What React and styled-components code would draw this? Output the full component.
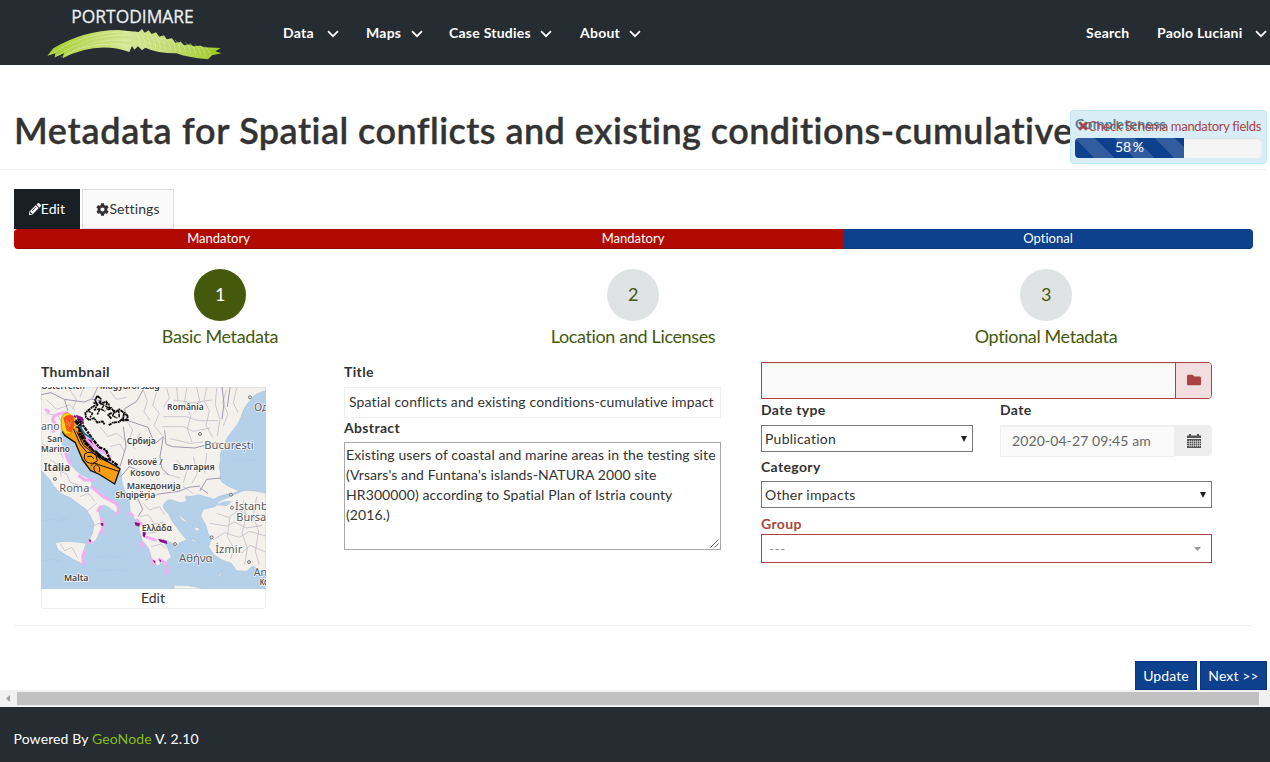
import React from "react";
import styled, { createGlobalStyle, css } from "styled-components";
import { FaPencilAlt, FaCog, FaTimes, FaFolder } from "react-icons/fa";

const Global = createGlobalStyle`
  * { box-sizing: border-box; }
  body { margin: 0; background: #fff; overflow: hidden; }
`;

const Page = styled.div`
  width: 1270px;
  height: 762px;
  display: flex;
  flex-direction: column;
  overflow: hidden;
  font-family: Lato, "Liberation Sans", sans-serif;
  font-size: 14px;
  line-height: 20px;
  color: #333;
  font-variant-ligatures: none;
`;

/* ---------- top bar ---------- */
const TopBar = styled.header`
  height: 65px;
  flex: none;
  display: flex;
  align-items: center;
  padding: 1px 3px 0 47px;
  background: #252c32;
  color: #fff;
  font-weight: 700;
`;
const Nav = styled.nav`
  display: flex;
  flex: 1;
  align-items: center;
  margin-left: 60px;
`;
const NavItem = styled.a`
  display: flex;
  align-items: center;
  white-space: nowrap;
  width: ${(p) => p.$w}px;
  letter-spacing: 0.25px;
`;
const NavText = styled.span`
  flex: none;
`;
const Chevron = styled.svg`
  margin-left: ${(p) => p.$gap}px;
  margin-top: 1px;
  flex: none;
`;
const Spacer = styled.div`
  flex: 1;
`;

/* ---------- content ---------- */
const Main = styled.main`
  height: 625px;
  flex: none;
  display: flex;
  flex-direction: column;
`;
const HeadRow = styled.div`
  position: relative;
  height: 105px;
  flex: none;
  padding: 45px 0 0 14px;
  margin-right: 3px;
  border-bottom: 1px solid #eee;
`;
const Heading = styled.h2`
  margin: 0;
  font-size: 36px;
  line-height: 40px;
  font-weight: 600;
  letter-spacing: 0.45px;
  -webkit-text-stroke: 0.35px #333;
  white-space: nowrap;
`;
const HeadingPrefix = styled.span`
  letter-spacing: 0.7px;
`;
const Completeness = styled.aside`
  position: absolute;
  right: 0;
  top: 45px;
  width: 197px;
  height: 54px;
  padding: 4px;
  border: 1px solid #bce8f1;
  border-radius: 4px;
  background: #d9edf7;
`;
const CompTitle = styled.div`
  height: 23px;
  line-height: 18px;
  font-weight: 700;
  letter-spacing: 0.25px;
  color: #31708f;
  opacity: 0.85;
`;
const CompWarning = styled.div`
  position: absolute;
  left: 6px;
  top: 6px;
  display: flex;
  align-items: center;
  font-size: 13px;
  line-height: 18px;
  letter-spacing: -0.3px;
  color: #a94442;
  white-space: nowrap;

  svg {
    stroke: #a94442;
    stroke-width: 30px;
    margin-right: -1px;
  }
`;
const Track = styled.div`
  height: 20px;
  border-radius: 4px;
  overflow: hidden;
  background: #f5f5f5;
  box-shadow: inset 0 1px 2px rgba(0, 0, 0, 0.1);
`;
const Fill = styled.div`
  width: 58.3%;
  height: 100%;
  text-align: center;
  line-height: 18px;
  word-spacing: -2px;
  color: #fff;
  background-color: #0d408d;
  background-image: linear-gradient(
    45deg,
    rgba(255, 255, 255, 0.15) 25%,
    transparent 25%,
    transparent 50%,
    rgba(255, 255, 255, 0.15) 50%,
    rgba(255, 255, 255, 0.15) 75%,
    transparent 75%,
    transparent
  );
  background-size: 40px 40px;
`;

const Workspace = styled.section`
  display: flex;
  flex-direction: column;
  height: 437px;
  flex: none;
  margin: 19px 17px 0 14px;
  border-bottom: 1px solid #f2f2f2;
  border-radius: 0 0 2px 2px;
`;
const Tabs = styled.div`
  display: flex;
  gap: 2px;
  height: 40px;
  flex: none;
  box-shadow: inset 0 -1px #f5f5f5;
`;
const Tab = styled.a`
  display: flex;
  align-items: center;
  justify-content: center;
  width: ${(p) => p.$w}px;
  height: 40px;
  border: 1px solid #ddd;
  background: #fafafa;
  color: #333;
  letter-spacing: 0.1px;
  ${(p) =>
    p.$active &&
    css`
      background: #181f25;
      border-color: #181f25;
      color: #fff;
    `}
`;
const Stages = styled.div`
  display: flex;
  height: 20px;
  flex: none;
  border-radius: 4px;
  overflow: hidden;
`;
const Stage = styled.div`
  width: ${(p) => p.$w}px;
  flex: none;
  text-align: center;
  color: #fff;
  font-size: 13px;
  line-height: 19px;
  background: ${(p) => (p.$optional ? "#0d408d" : "#b10a00")};
  box-shadow: inset 0 -1px 0 rgba(0, 0, 0, 0.15);
`;
const Steps = styled.div`
  display: flex;
  padding: 20px 1px 0 0;
  margin-left: -1px;
  flex: none;
`;
const Step = styled.div`
  flex: 1;
  display: flex;
  flex-direction: column;
  align-items: center;
  font-size: 18px;
  line-height: 26px;
  letter-spacing: -0.36px;
  color: #44590c;
`;
const StepName = styled.span`
  padding-left: 1px;
`;
const Bubble = styled.span`
  width: 52px;
  height: 52px;
  border-radius: 50%;
  margin-bottom: 2px;
  padding: 0 0 2px 1px;
  display: grid;
  place-items: center;
  background: ${(p) => (p.$active ? "#44590c" : "#dfe3e4")};
  color: ${(p) => (p.$active ? "#fff" : "#44590c")};
`;

/* ---------- form ---------- */
const Form = styled.div`
  display: flex;
  padding: 13px 41px 0 27px;
  flex: none;
`;
const ThumbCol = styled.div`
  width: 225px;
  margin-right: 78px;
`;
const TextCol = styled.div`
  width: 377px;
  margin-right: 40px;
`;
const SideCol = styled.div`
  width: 451px;
`;
const Label = styled.label`
  display: block;
  height: ${(p) => p.$h || 25}px;
  line-height: ${(p) => p.$lh || 20}px;
  font-weight: 700;
  letter-spacing: 0.35px;
  color: ${(p) => (p.$error ? "#a94442" : "#333")};
`;
const MapSvg = styled.svg`
  display: block;
`;
const ThumbEdit = styled.button`
  display: block;
  width: 225px;
  height: 20px;
  padding: 0 1px 2px 0;
  border: 1px solid #eee;
  border-top: 0;
  border-radius: 0 0 3px 3px;
  background: #fff;
  color: #333;
  font: 14px/17px Lato, sans-serif;
`;
const TextInput = styled.div`
  height: 31px;
  padding: 0 0 0 4px;
  margin-bottom: 1px;
  border: 1px solid #eee;
  line-height: 28px;
  letter-spacing: 0.13px;
  white-space: nowrap;
`;
const AbstractBox = styled.div`
  position: relative;
  height: 108px;
  padding: 2px 3px 2px 1px;
  border: 1px solid #a9a9a9;
  line-height: 20px;
  letter-spacing: 0.1px;
`;
const Grip = styled.svg`
  position: absolute;
  right: 1px;
  bottom: 1px;
`;
const FileRow = styled.div`
  display: flex;
  height: 37px;
  margin-bottom: 1px;
  border: 1px solid #a94442;
  border-radius: 0 4px 4px 0;
  background: #fafafa;
  overflow: hidden;
  box-shadow: inset 0 1px 1px rgba(0, 0, 0, 0.075);
`;
const FileButton = styled.span`
  margin-left: auto;
  width: 36px;
  padding-bottom: 1px;
  border-left: 1px solid #a94442;
  background: #f2dede;
  color: #a94442;
  display: grid;
  place-items: center;
`;
const DateRow = styled.div`
  display: flex;
  justify-content: space-between;
  height: 57px;
`;
const Half = styled.div`
  width: 212px;
`;
const Select = styled.div`
  display: flex;
  align-items: center;
  justify-content: space-between;
  height: 27px;
  padding: 0 5px 0 3px;
  border: 1px solid #767676;
  background: #fff;
  letter-spacing: 0.25px;
  margin-bottom: 6px;
`;
const GroupSelect = styled(Select)`
  height: 29px;
  padding: 0 10px 0 7px;
  border-color: #a94442;
  color: #999;
`;
const DateBox = styled.div`
  display: flex;
  height: 32px;
  border-radius: 0 4px 4px 0;
  overflow: hidden;
`;
const DateValue = styled.div`
  flex: 1;
  padding-left: 11px;
  border: 1px solid #eee;
  border-top-width: 2px;
  background: #fafafa;
  color: #666;
  font-size: 14px;
  line-height: 28px;
  letter-spacing: 0.1px;
`;
const DateButton = styled.span`
  width: 37px;
  height: 31px;
  background: #eee;
  display: grid;
  place-items: center;
  border-radius: 0 4px 4px 0;
`;

/* ---------- bottom ---------- */
const Actions = styled.div`
  display: flex;
  justify-content: flex-end;
  gap: 3px;
  margin-top: auto;
  padding-right: 3px;
`;
const Action = styled.button`
  width: ${(p) => p.$w}px;
  height: 29px;
  padding: 0;
  border: 1px solid #0a3388;
  background: #0d408d;
  color: #fff;
  font: 14px/27px Lato, sans-serif;
  letter-spacing: 0.1px;
  white-space: nowrap;
`;
const ScrollBar = styled.div`
  height: 17px;
  flex: none;
  display: flex;
  align-items: center;
  background: #f1f1f1;
`;
const ScrollThumb = styled.div`
  width: 1242px;
  height: 13px;
  background: #c1c1c1;
`;
const Footer = styled.footer`
  height: 55px;
  flex: none;
  padding: 22px 13.5px 0;
  background: #252c32;
  color: #fff;
  letter-spacing: 0.12px;
`;
const FooterLink = styled.a`
  color: #84bd1c;
`;

const Down = ({ gap = 12 }) => (
  <Chevron $gap={gap} width="12" height="8" viewBox="0 0 12 8">
    <path d="M1 1.2l5 5 5-5" fill="none" stroke="#fff" strokeWidth="1.7" />
  </Chevron>
);

const ribs = Array.from({ length: 15 }, (_, i) => i);

const Logo = () => (
  <svg width="176" height="64" viewBox="141 0 528 192">
    <defs>
      <linearGradient id="wave" x1="0" x2="1">
        <stop offset="0" stopColor="#a5cf2c" />
        <stop offset="0.45" stopColor="#d3e794" />
        <stop offset="0.7" stopColor="#c5dd78" />
        <stop offset="1" stopColor="#9bcb1f" />
      </linearGradient>
    </defs>
    <text x="214" y="67" fontFamily="'Open Sans', sans-serif" fontWeight="400" fontSize="55" textLength="367" lengthAdjust="spacingAndGlyphs" fill="#eef0f0" stroke="#eef0f0" strokeWidth="0.8">
      PORTODIMARE
    </text>
    <path
      d="M142 164 L160 142 Q250 88 355 87 L416 93 L426 84 L434 95 L446 88 L455 99 L468 94 L478 107 L492 103 L500 115 L516 112 L526 125 L542 123 L552 133 L570 130 L580 136 L600 134 L614 139 L662 141 L646 151 L665 157 L636 163 L624 175 Q560 169 530 157 Q470 157 436 140 L426 148 L414 136 L403 146 L396 135 L388 153 Q290 119 188 172 L192 157 L164 169 L166 157 Z"
      fill="url(#wave)"
    />
    <g fill="none" stroke="#f3f8df" strokeWidth="1.8" opacity="0.6" transform="translate(0 -3)">
      <path d="M164 172 Q270 100 398 104 M182 172 Q270 113 394 120 M200 162 Q290 118 394 138 M150 164 Q250 96 380 95" />
      {ribs.map((i) => (
        <path key={i} d={`M${405 + i * 15} ${94 + i * 3.2} q18 20 16 ${48 - i * 1.3}`} />
      ))}
    </g>
    <g fill="none" stroke="#84ae1b" strokeWidth="1.6" strokeDasharray="2 4" opacity="0.7" transform="translate(0 -3)">
      <path d="M175 160 Q280 102 395 112 M192 164 Q290 112 390 130 M440 120 Q530 155 650 152 M440 134 Q530 162 640 162 M160 156 Q250 103 370 99" />
    </g>
  </svg>
);

const Place = ({ x, y, w, size = 26, bold, children }) => (
  <text
    x={x}
    y={y}
    fontSize={size}
    textLength={w}
    lengthAdjust="spacingAndGlyphs"
    fontWeight={bold ? 600 : 400}
    fill={bold ? "#444" : "#5b5b60"}
    stroke="#fff"
    strokeWidth="5"
    strokeOpacity="0.8"
    paintOrder="stroke"
    strokeLinejoin="round"
  >
    {children}
  </text>
);

const MapThumb = () => (
  <MapSvg width="225" height="202" viewBox="33 81 675 606" fontFamily="'Noto Sans', sans-serif">
    <rect x="33" y="81" width="675" height="606" fill="#b5d0e9" />
    {/* land */}
    <g fill="#f4f1ec" stroke="#9fbcd6" strokeWidth="1.5">
      <path d="M33 81 H708 V92 Q672 100 664 118 Q640 140 634 168 Q628 190 606 214 Q584 240 582 262 Q566 280 572 300 Q564 320 572 342 Q566 352 576 366 Q598 384 628 392 L610 400 Q570 404 552 418 Q528 410 506 404 Q480 412 466 408 L470 424 Q450 432 436 424 Q412 410 400 436 Q398 446 416 462 Q424 484 440 502 Q456 524 470 540 L448 548 L438 562 L424 548 L392 536 L412 562 L424 590 L412 600 L412 640 L398 606 L384 618 L368 606 L356 566 L336 540 L326 500 L310 470 L300 452 L298 412 Q280 392 276 366 L272 328 Q240 310 218 286 Q180 240 158 208 L140 180 Q112 160 96 190 L92 222 Q88 240 104 270 Q110 300 122 312 Q140 340 170 352 Q190 364 184 380 Q220 408 258 430 Q272 448 262 464 Q240 440 220 436 Q196 450 216 482 Q226 498 208 520 Q196 548 182 554 Q172 546 188 520 L192 490 Q180 462 166 446 Q140 428 122 414 Q80 400 60 360 L33 330 Z" />
      <path d="M76 548 Q110 540 168 550 L158 584 L162 614 Q130 600 84 570 Z" />
      <path d="M708 400 Q680 390 640 392 Q600 410 566 424 L556 440 L520 448 L512 468 L528 496 L534 520 L544 538 L536 560 L552 584 L576 600 L604 610 L620 632 L650 634 L668 618 L690 632 L708 640 Z" />
      <path d="M430 676 L470 676 L512 684 V687 H434 Z M564 650 L578 630 L572 648 Z M440 458 L478 490 L458 482 Z M490 500 L512 506 L500 514 Z M478 532 L508 548 L490 544 Z" />
    </g>
    <path d="M556 436 Q580 420 606 424 L590 438 Z" fill="#b5d0e9" />
    {/* regional boundaries */}
    <g fill="none" stroke="#bcb6c6" strokeWidth="2.2">
      <path d="M340 90 l12 34 l-10 30 l18 28 M380 96 l-12 40 l20 24 l-16 36 l24 30 M410 84 l8 30 l-18 28 M440 82 l4 40 M470 84 l-6 40 l18 44 l-10 38 l14 40 M500 82 l10 44 l-14 32 M530 82 l-8 40 l16 30 l-10 44 l20 36 M560 84 l-4 50 l14 44 l-8 50 M400 170 h70 l34 12 h60 M396 200 h64 l30 14 l50 -10 M420 236 l60 14 l40 -4 M430 120 l60 8 l56 -8 M590 88 l-12 40 l16 34 l-14 36 M620 84 l-10 44 l14 30" />
      <path d="M50 120 l30 28 l40 -14 l16 20 M50 160 l34 8 l14 22 M36 250 l26 20 l24 -4 l14 30 M60 300 l28 16 l6 34 M82 330 l28 12 l12 26 l34 10 M110 392 l26 -18 l22 12 l30 -6 M150 410 l26 -10 l18 24 M200 430 l-30 24 M184 500 l28 -12 M120 90 l20 30 l-12 26 M160 84 l-10 28 M90 550 l14 22 l22 -10 l16 30 M240 94 l20 24 l30 -6 M210 200 l24 30 l26 -10 l30 24 M240 260 l30 -8 l14 24 M288 180 l20 30 l-12 34 l20 24 M330 220 l-16 30" />
      <path d="M340 430 l18 20 l30 -10 l16 24 M330 470 l24 -6 l20 28 l28 -6 M350 520 l30 -4 M364 560 l28 -8 l14 14 M440 300 l30 34 l-10 34 M490 290 l12 50 l-16 30 M530 280 l-6 60 M400 340 l50 14 M460 380 l28 20" />
      <path d="M560 460 l36 12 l30 -22 l40 22 l42 -10 M540 490 l50 8 l24 -12 l34 18 l50 -8 M548 540 l36 -22 l44 14 l30 -18 l50 14 M570 580 l30 -16 l36 14 l24 -22 l46 20 M600 470 l-8 60 l20 36 l-10 30 M640 420 l8 50 l-12 50 l16 44 l-8 50 M680 410 l-10 60 l16 44 l-10 60 l12 40" />
    </g>
    {/* country borders */}
    <g fill="none" stroke="#9f98ae" strokeWidth="3" strokeLinejoin="round">
      <path d="M33 104 l30 -6 l40 20 l60 8 l24 -10 l16 -34 M104 120 l10 34 M186 118 l34 6 M290 176 l-6 -30 l36 -22 l20 -36 l12 -7 M288 180 l66 22 l20 50 l26 -22 M404 212 l4 40 l20 8 l66 4 l60 -16 l28 4 M400 230 l-10 60 l6 36 l20 18 M576 81 l6 50 l-6 46 M270 320 l18 -60 l-8 -60 M272 350 l26 -30 l32 14 M318 404 l20 44 l-14 22 M346 420 l40 -18 l60 -8 l30 -12 l34 -4 M510 392 l20 -34 l44 -4 M510 384 l24 16 M600 81 l-8 60" />
    </g>
    <g fill="none" stroke="#9fc0df" strokeWidth="1" opacity="0.7">
      <path d="M33 600 q10 5 20 0 t20 0 t20 0 M190 630 q10 5 20 0 t20 0 t20 0 t20 0 t20 0 M440 620 q10 5 20 0 t20 0 t20 0 M200 590 q10 5 20 0 t20 0 t20 0 t20 0 M33 480 q10 5 20 0 t20 0 t20 0 t20 0 M600 300 q10 5 20 0 t20 0 t20 0 t20 0" />
    </g>
    {/* coastal highlights */}
    <g fill="none" stroke="#f3aef2" strokeWidth="9" strokeLinejoin="round" strokeLinecap="round">
      <path d="M110 158 Q66 160 68 182 Q82 190 70 214 M104 270 Q112 300 122 312 M148 348 L164 360 L190 360 M186 382 L222 412 L258 430 Q272 448 260 462 M212 440 L204 452 M214 476 Q226 498 210 520 M184 546 L176 548 M164 574 L158 588 L160 612 M298 460 L308 466 M320 480 L344 500 L344 530 M332 548 L340 560 M366 600 L370 612 M352 532 L376 540 M388 598 L408 610 L412 640 M150 210 L200 262 L240 290" />
      <path d="M48 150 L56 154" />
    </g>
    <g fill="#8c1287">
      <path d="M314 486 l16 4 l-2 10 l-12 -4z M338 514 l10 4 l-4 14 l-6 -4z M384 536 l26 6 l2 10 l-22 -6z M212 488 l8 2 v8 l-8 -2z M176 538 l8 2 l-4 8z M368 600 l8 2 v10z M388 598 l6 4 l-4 6z M138 164 l20 8 l4 20 l-16 -4z M168 236 l16 4 l6 20 l-20 -10z" />
    </g>
    {/* plan area */}
    <path d="M98 216 L128 198 L150 204 L164 232 L190 268 L214 294 L270 326 L254 372 L206 342 L182 332 L158 300 L136 248 L104 226 Z" fill="#f89c12" stroke="#111" strokeWidth="4" strokeLinejoin="round" />
    <path d="M94 178 Q96 160 112 158 L134 172 L138 200 L122 222 L104 222 L94 204 Z" fill="#ffd60a" stroke="#c07a00" strokeWidth="2" />
    <path d="M100 174 Q112 160 130 168 L134 196 L124 218 L110 212 Z" fill="#f6501c" />
    <path d="M108 180 l10 14 l8 -14 M112 206 l10 -10 M106 190 l10 6" stroke="#e8a23a" strokeWidth="2.5" fill="none" />
    <g fill="none" stroke="#151010" strokeWidth="3" strokeLinejoin="round">
      <path d="M130 206 L150 252 L170 276 M164 282 q16 -12 34 4 l4 16 q-14 14 -32 4 q-12 -12 -6 -24 z M172 290 q12 -6 20 6 M182 318 q12 -14 24 -4 l60 20 M196 336 q-10 -14 2 -22 q14 2 10 22 M140 214 L160 256 L196 284 L214 300" />
    </g>
    <path d="M136 182 L150 198 L150 222 L168 250 L190 270 L214 292 L238 304" fill="none" stroke="#0b0b0b" strokeWidth="10" strokeDasharray="14 2 8 1" />
    <path d="M144 176 L166 206 L190 240 L208 262 L228 270 L240 300 L266 318" fill="none" stroke="#0b0b0b" strokeWidth="7" strokeDasharray="7 2 12 3" />
    <path d="M148 198 L164 222 L190 238" stroke="#1c6f85" strokeWidth="5" fill="none" />
    <path d="M168 236 L184 254 L196 270" stroke="#f3a8ef" strokeWidth="7" fill="none" />
    <path d="M132 168 L158 180 L156 192" stroke="#8c1287" strokeWidth="6" fill="none" strokeDasharray="8 3" />
    {/* inland outlines */}
    <g fill="none" stroke="#090909" strokeLinejoin="bevel">
      <path strokeWidth="5.5" strokeDasharray="10 1 5 2" d="M202 108 l-8 14 l8 10 l-16 10 l-20 16 l2 14 l10 8 l14 -6 l10 14 l16 -4 l6 10 M202 108 l10 8 l-2 16 l22 -8 l-4 18 l16 2 l10 14 l14 -10 l16 12 l10 8 l-4 12 l-14 -2 l-10 8 l-18 2 l-12 8 M244 176 l-10 -12 l12 -6 M282 160 l-4 22 l18 -2" />
      <path strokeWidth="4.5" strokeDasharray="7 2 11 2" d="M190 128 l14 6 l-12 16 l18 -4 l-8 18 M176 154 l12 6 l-8 12 M206 126 l16 10 l-8 12 l12 6 M236 130 l4 20 l-12 -4 M254 150 l-6 18 l14 6 M266 152 l2 22" />
    </g>
    <g fill="#ddd" stroke="#666" strokeWidth="2.5">
      <circle cx="75" cy="357" r="4.5" />
      <circle cx="510" cy="222" r="4.5" />
      <circle cx="603" cy="404" r="4.5" />
      <circle cx="606" cy="443" r="4.5" />
      <circle cx="545" cy="532" r="4.5" />
      <circle cx="435" cy="552" r="4.5" />
      <circle cx="657" cy="606" r="4.5" />
      <circle cx="660" cy="112" r="4.5" />
    </g>
    <Place x="33" y="87" w="132" bold>Österreich</Place>
    <Place x="209" y="87" w="180" bold>Magyarország</Place>
    <Place x="411" y="149" w="110" bold>România</Place>
    <Place x="672" y="154" w="44" size={34}>Од</Place>
    <Place x="33" y="211" w="56" size={32}>ano</Place>
    <Place x="52" y="246" w="45" bold>San</Place>
    <Place x="33" y="276" w="87" bold>Marino</Place>
    <Place x="290" y="252" w="87" bold>Србија</Place>
    <Place x="523" y="268" w="148" size={34}>București</Place>
    <Place x="41" y="332" w="80" size={32} bold>Italia</Place>
    <Place x="292" y="316" w="106" bold>Kosovë /</Place>
    <Place x="300" y="347" w="90" bold>Kosovo</Place>
    <Place x="428" y="331" w="126" bold>България</Place>
    <Place x="88" y="397" w="90" size={34}>Roma</Place>
    <Place x="290" y="386" w="162" bold>Македонија</Place>
    <Place x="256" y="413" w="120" bold>Shqipëria</Place>
    <Place x="615" y="449" w="98" size={34}>İstanb</Place>
    <Place x="619" y="482" w="89" size={34}>Bursa</Place>
    <Place x="335" y="514" w="91" bold>Ελλάδα</Place>
    <Place x="556" y="579" w="81" size={34}>İzmir</Place>
    <Place x="447" y="607" w="101" size={35}>Αθήνα</Place>
    <Place x="102" y="663" w="73" bold>Malta</Place>
    <Place x="671" y="648" w="40" size={32}>An</Place>
    <Place x="689" y="675" w="26" bold>Ko</Place>
  </MapSvg>
);

const Calendar = () => (
  <svg width="14" height="14" viewBox="0 0 14 14">
    <path d="M0 1.5h2V0h2v1.5h6V0h2v1.5h2V4H0z" fill="#555" />
    <rect y="5" width="14" height="9" fill="#555" />
    <path d="M0 7.5h14M0 9.5h14M0 11.5h14M2.5 6v7M4.5 6v7M6.5 6v7M8.5 6v7M10.5 6v7M12.5 6v7" stroke="#eee" strokeWidth="0.5" />
  </svg>
);

const Arrow = ({ fill = "#222", w = 6, h = 6 }) => (
  <svg width={w} height={h} viewBox="0 0 6 6" preserveAspectRatio="none">
    <path d="M0 0h6L3 6z" fill={fill} />
  </svg>
);

export default function App() {
  return (
    <Page>
      <Global />
      <TopBar>
        <Logo />
        <Nav>
          <NavItem $w={83}><NavText>Data</NavText><Down gap={13} /></NavItem>
          <NavItem $w={83}><NavText>Maps</NavText><Down gap={10} /></NavItem>
          <NavItem $w={131}><NavText>Case Studies</NavText><Down gap={9} /></NavItem>
          <NavItem $w={70}><NavText>About</NavText><Down gap={9} /></NavItem>
          <Spacer />
          <NavItem $w={71}><NavText>Search</NavText></NavItem>
          <NavItem $w={110}><NavText>Paolo Luciani</NavText><Down gap={12} /></NavItem>
        </Nav>
      </TopBar>
      <Main>
        <HeadRow>
          <Heading>
            <HeadingPrefix>Metadata for </HeadingPrefix>
            Spatial conflicts and existing conditions-cumulative
          </Heading>
          <Completeness>
            <CompTitle>Completeness</CompTitle>
            <CompWarning><FaTimes size={12} />Check Schema mandatory fields</CompWarning>
            <Track><Fill>58 %</Fill></Track>
          </Completeness>
        </HeadRow>
        <Workspace>
          <Tabs>
            <Tab $active $w={66}><FaPencilAlt size={12} />Edit</Tab>
            <Tab $w={92}><FaCog size={13} />Settings</Tab>
          </Tabs>
          <Stages>
            <Stage $w={409}>Mandatory</Stage>
            <Stage $w={420}>Mandatory</Stage>
            <Stage $w={410} $optional>Optional</Stage>
          </Stages>
          <Steps>
            <Step><Bubble $active>1</Bubble><StepName>Basic Metadata</StepName></Step>
            <Step><Bubble>2</Bubble><StepName>Location and Licenses</StepName></Step>
            <Step><Bubble>3</Bubble><StepName>Optional Metadata</StepName></Step>
          </Steps>
          <Form>
            <ThumbCol>
              <Label>Thumbnail</Label>
              <MapThumb />
              <ThumbEdit>Edit</ThumbEdit>
            </ThumbCol>
            <TextCol>
              <Label>Title</Label>
              <TextInput>Spatial conflicts and existing conditions-cumulative impact</TextInput>
              <Label $h={23} $lh={18}>Abstract</Label>
              <AbstractBox>
                Existing users of coastal and marine areas in the testing site (Vrsars's and Funtana's islands-NATURA 2000 site
                HR300000) according to Spatial Plan of Istria county (2016.)
                <Grip width="9" height="9" viewBox="0 0 9 9">
                  <path d="M0.5 8.5l8-8M4.5 8.5l4-4" stroke="#666" strokeWidth="1" />
                </Grip>
              </AbstractBox>
            </TextCol>
            <SideCol>
              <FileRow><FileButton><FaFolder size={14} /></FileButton></FileRow>
              <DateRow>
                <Half>
                  <Label>Date type</Label>
                  <Select>Publication<Arrow /></Select>
                </Half>
                <Half>
                  <Label>Date</Label>
                  <DateBox>
                    <DateValue>2020-04-27 09:45 am</DateValue>
                    <DateButton><Calendar /></DateButton>
                  </DateBox>
                </Half>
              </DateRow>
              <Label $h={24}>Category</Label>
              <Select>Other impacts<Arrow /></Select>
              <Label $error $h={20}>Group</Label>
              <GroupSelect>---<Arrow fill="#999" w={7} h={4} /></GroupSelect>
            </SideCol>
          </Form>
        </Workspace>
        <Actions>
          <Action $w={62}>Update</Action>
          <Action $w={67}>Next &gt;&gt;</Action>
        </Actions>
      </Main>
      <ScrollBar>
        <svg width="17" height="17" viewBox="0 0 17 17">
          <path d="M10 5v7L6 8.5z" fill="#a3a3a3" />
        </svg>
        <ScrollThumb />
      </ScrollBar>
      <Footer>
        Powered By <FooterLink>GeoNode</FooterLink> V. 2.10
      </Footer>
    </Page>
  );
}
